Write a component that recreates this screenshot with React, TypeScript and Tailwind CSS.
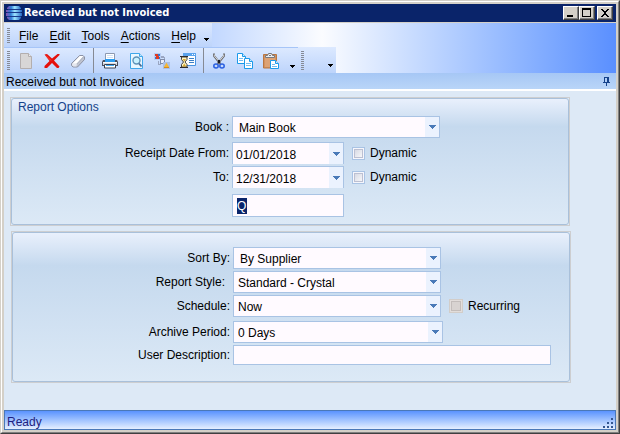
import { useState } from "react";
import type { ReactNode } from "react";
import clsx from "clsx";

function Grip({ dots }: { dots: number }) {
  return (
    <svg width="3" height={dots * 2 - 1} viewBox={`0 0 3 ${dots * 2 - 1}`} shapeRendering="crispEdges" aria-hidden="true">
      {Array.from({ length: dots }, (_, i) => (
        <rect key={i} x="0" y={i * 2} width="3" height="1" fill="#858a96" />
      ))}
    </svg>
  );
}

function DownArrow({ color }: { color: string }) {
  return (
    <svg width="7" height="4" viewBox="0 0 7 4" shapeRendering="crispEdges" aria-hidden="true">
      <path d="M0 0h7v1H0zM1 1h5v1H1zM2 2h3v1H2zM3 3h1v1H3z" fill={color} />
    </svg>
  );
}

function OverflowArrow() {
  return (
    <svg width="5" height="3" viewBox="0 0 5 3" shapeRendering="crispEdges" aria-hidden="true">
      <path d="M0 0h5v1H0zM1 1h3v1H1zM2 2h1v1H2z" fill="#000" />
    </svg>
  );
}

function Logo() {
  return (
    <svg width="16" height="14" viewBox="0 0 16 14" aria-hidden="true">
      <defs>
        <linearGradient id="disc" x1="0" x2="1">
          <stop offset="0" stopColor="#8a4fb0" />
          <stop offset="0.3" stopColor="#2f7fd8" />
          <stop offset="0.55" stopColor="#9fe6ff" />
          <stop offset="1" stopColor="#2467c4" />
        </linearGradient>
      </defs>
      <path d="M3 0h10l2 2v1H1V2z" fill="url(#disc)" />
      <path d="M0 4h16v2H0z" fill="url(#disc)" />
      <path d="M0 7h16v3H0z" fill="url(#disc)" />
      <path d="M1 11h14v1l-2 2H3l-2-2z" fill="url(#disc)" />
      <path d="M2 3h12v1H2zM1 6h14v1H1zM1 10h14v1H1z" fill="#173a8c" />
    </svg>
  );
}

function Icon({ children }: { children: ReactNode }) {
  return (
    <svg width="16" height="16" viewBox="0 0 16 16" aria-hidden="true">
      {children}
    </svg>
  );
}

const newIcon = (
  <Icon>
    <path d="M2.5.5h8l3 3v12h-11z" fill="#d8d6d6" stroke="#b3aeae" />
    <path d="M10.5.5v3h3" fill="#eceaea" stroke="#b3aeae" />
  </Icon>
);
const deleteIcon = (
  <Icon>
    <path d="M.5 1.5 3 1l5 4.500L13.500 1h2v1L10 7.500l5.500 6-1 1.500H13L8 10l-5 5H.5v-2L5.500 8z" fill="#e5100c" />
    <path d="M2 2.500 7 7.500" stroke="#ff4a3a" fill="none" />
  </Icon>
);
const eraserIcon = (
  <Icon>
    <path d="M9.500 2.500H13l1.500 1.500v2.500l-7 7.500H3L1.500 12.500V10.500z" fill="#bfc3cf" stroke="#8d93a6" strokeLinejoin="round" />
    <path d="M9.800 3h3.700L6.800 10.800H2.200z" fill="#fff" />
    <path d="M2 11h4.800L6.500 13.500H3.500L2 12.300z" fill="#e4e7ef" />
    <path d="m6.800 11 7-7.500" stroke="#a3a9ba" strokeWidth=".8" fill="none" />
  </Icon>
);
const printIcon = (
  <Icon>
    <path d="M3.500 8V.5h9V8" fill="#fff" stroke="#8d99b0" />
    <path d="M5 2h6v1H5zM5 4h6v1H5z" fill="#cfe2f8" />
    <path d="M1 7h2v2h10V7h2l1 2v4H0V9z" fill="#4b5160" />
    <path d="M3 6h10v3H3z" fill="#2b9cf0" />
    <path d="M1 9h14v3H1z" fill="#d8dbe3" />
    <path d="M1 9h14v1H1z" fill="#f7f8fb" />
    <path d="M2.500 11.500h11v3.500h-11z" fill="#fff" stroke="#3a4252" />
    <path d="M4 12h8v1H4z" fill="#43a8f2" />
  </Icon>
);
const previewIcon = (
  <Icon>
    <path d="M2.500.5h9l3 3v12h-12z" fill="#e9f6ff" stroke="#3fa6ea" />
    <path d="M11.500.5v3h3" fill="#bfe4fb" stroke="#3fa6ea" />
    <circle cx="8.500" cy="7.500" r="3.500" fill="#c9f1ff" stroke="#5e92b8" strokeWidth="1.400" />
    <path d="m11 10.500 2.500 3" stroke="#4a6c96" strokeWidth="1.800" />
  </Icon>
);
const linkIcon = (
  <Icon>
    <path d="M0 0h7v7H0z" fill="#b7cdf3" />
    <path d="M1 1h3v2H1zM2 3h3v3H2z" fill="#e03a22" />
    <path d="M4 1h2v2H4zM1 4h1v2H1zM5 4h1v2H5z" fill="#3675d4" />
    <path d="M6 6h5v5H6z" fill="#7f8ba8" />
    <path d="M7 7h3v3H7z" fill="#e8eefb" />
    <path d="M7 3h3v1h1v2h-1V5H7zM5 8v3h2v1H4V8z" fill="#9aa6c2" />
    <path d="M9 9h7v7H9z" fill="#a9bfe6" />
    <path d="m12.500 9.500 2.800 5H9.700z" fill="#f7b731" />
    <path d="M10 14h5v1h-5z" fill="#d68b1d" />
  </Icon>
);
const scheduleIcon = (
  <Icon>
    <path d="M3.500.5h12v12h-12z" fill="#fff" stroke="#4b93e0" />
    <path d="M3 0h13v3H3z" fill="#5aa3ee" />
    <path d="M12 1h1v1h-1zM14 1h1v1h-1z" fill="#fff" />
    <path d="M9 5h5v1H9zM9 7h5v1H9zM9 9h5v1H9z" fill="#3b7fc6" />
    <path d="M1.500 4h5.500v2.500L5 9l2 2.500V14H1.500v-2.500l2-2.500-2-2.500z" fill="#fbf3c9" stroke="#4a4538" />
    <path d="M0 3h8v1H0zM0 14h8v1H0z" fill="#2e2c2b" />
    <path d="M2.500 6h3.500L4.300 8.500zM4.200 10.500l2 3H2.500z" fill="#d8a82b" />
  </Icon>
);
const cutIcon = (
  <Icon>
    <path d="M3 .5v2.500L9.500 11M13 .5v2.500L6.500 11" stroke="#6c6c70" strokeWidth="2" fill="none" />
    <path d="M3.300 1.500v1.500L8.500 9M12.700 1.500v1.500L7.500 9" stroke="#eeeeee" strokeWidth=".8" fill="none" />
    <path d="M7 7h2v3H7z" fill="#1c1c22" />
    <ellipse cx="5" cy="13" rx="2.200" ry="2" fill="none" stroke="#2a5fe0" strokeWidth="1.500" />
    <ellipse cx="11" cy="13" rx="2.200" ry="2" fill="none" stroke="#2a5fe0" strokeWidth="1.500" />
  </Icon>
);
const copyIcon = (
  <Icon>
    <path d="M.5.5h5l3 3v7h-8z" fill="#fff" stroke="#1c9aea" />
    <path d="M5.500.5v3h3" fill="#cdeafd" stroke="#1c9aea" />
    <path d="M2 5.500h4M2 7.500h4" stroke="#74bdf0" />
    <path d="M7.500 5.500h5l3 3v7h-8z" fill="#fff" stroke="#1c9aea" />
    <path d="M12.500 5.500v3h3" fill="#cdeafd" stroke="#1c9aea" />
    <path d="M9 10.500h5M9 12.500h5" stroke="#74bdf0" />
  </Icon>
);
const pasteIcon = (
  <Icon>
    <path d="M.5 1.500h13v13.500H.5z" fill="#d4935f" stroke="#b87643" />
    <path d="M2 4h10v10H2z" fill="#dda274" />
    <path d="M2.500 2.500h2l1-2h3l1 2h2v2h-9z" fill="#eceef2" stroke="#77797f" />
    <path d="M6 2h2v1H6z" fill="#77797f" />
    <path d="M7.500 7.500h5l3 3v5h-8z" fill="#fff" stroke="#1c9aea" />
    <path d="M12.500 7.500v3h3" fill="#cdeafd" stroke="#1c9aea" />
    <path d="M9 11.500h3M9 13.500h5" stroke="#74bdf0" />
  </Icon>
);

function Tool({ label, children }: { label: string; children: ReactNode }) {
  return (
    <button type="button" aria-label={label} className="flex h-6 w-[26px] items-center justify-center">
      {children}
    </button>
  );
}

function Separator() {
  return <span className="mx-[2px] h-[25px] w-px bg-[#868a94]" />;
}

function CaptionButton({ label, children }: { label: string; children: ReactNode }) {
  return (
    <button
      type="button"
      aria-label={label}
      className="flex h-[14px] w-4 items-center justify-center border border-t-white border-r-[#404040] border-b-[#404040] border-l-white bg-[#d4d0c8] shadow-[inset_-1px_-1px_0_#808080]"
    >
      <svg width="10" height="10" viewBox="0 0 10 10" shapeRendering="crispEdges" aria-hidden="true">
        {children}
      </svg>
    </button>
  );
}

function Panel({ className, children }: { className?: string; children: ReactNode }) {
  return (
    <section className={clsx("border border-[#cdced0]", className)}>
      <div className="rounded-[3px] border border-[#a9c0da] bg-linear-to-b from-[#e9f0fc] via-[#c5d9ee] via-22% to-[#dce9f6]">
        {children}
      </div>
    </section>
  );
}

function Row({ label, htmlFor, labelClass = "pr-px", children }: { label?: string; htmlFor?: string; labelClass?: string; children: ReactNode }) {
  return (
    <div className="grid grid-cols-[218px_1fr] items-center gap-[2px]">
      {label ? (
        <label htmlFor={htmlFor} className={clsx("text-right leading-5", labelClass)}>
          {label}
        </label>
      ) : (
        <span />
      )}
      <div className="flex items-center">{children}</div>
    </div>
  );
}

function Combo({ id, value, className }: { id: string; value: string; className: string }) {
  return (
    <div className="grid">
      <select
        id={id}
        className={clsx("col-start-1 row-start-1 h-[22px] appearance-none border border-[#a9c3e4] bg-[#fffaff] pt-px outline-none", className)}
      >
        <option>{value}</option>
      </select>
      <span className="pointer-events-none col-start-1 row-start-1 m-px flex w-[14px] items-center justify-center justify-self-end bg-[#ebf2fe]">
        <DownArrow color="#4a7ab8" />
      </span>
    </div>
  );
}

function DateBox({ id, initial }: { id: string; initial: string }) {
  const [value, setValue] = useState(initial);
  return (
    <div className="flex h-[22px] w-28 border border-b-0 border-[#a9c3e4] bg-[#fffaff]">
      <input
        id={id}
        value={value}
        onChange={(e) => setValue(e.target.value)}
        className="min-w-0 flex-1 bg-transparent pt-[2px] pl-[3px] outline-none"
      />
      <button type="button" aria-label="Open calendar" className="flex w-[14px] items-center justify-center bg-[#ebf2fe]">
        <DownArrow color="#4a7ab8" />
      </button>
    </div>
  );
}

function Check({ label, disabled }: { label: string; disabled?: boolean }) {
  return (
    <label className="ml-2 flex items-center gap-[5px] leading-5">
      <input
        type="checkbox"
        disabled={disabled}
        className={clsx(
          "appearance-none border",
          disabled
            ? "size-[14px] border-[#d2cdc9] bg-[#d8d3d1] shadow-[inset_0_0_0_1px_#e2dddb,inset_0_0_0_2px_#c3bdbb]"
            : "size-[13px] border-[#a9c3e4] bg-linear-to-br from-[#cfd2de] to-[#ffffff] shadow-[inset_0_0_0_1px_#f6f6fc,inset_0_0_0_2px_#bcc0d2]",
        )}
      />
      {label}
    </label>
  );
}

const menus = ["File", "Edit", "Tools", "Actions", "Help"];

export default function App() {
  return (
    <div className="flex min-h-screen flex-col border border-t-[#d4d0c8] border-r-[#404040] border-b-[#404040] border-l-[#d4d0c8] bg-[#d4d0c8] font-['Liberation_Sans',Arial,sans-serif] text-[12px] text-black">
      <div className="flex flex-1 flex-col border border-t-white border-r-[#808080] border-b-[#808080] border-l-white p-[2px]">
        <header className="mb-px flex h-[18px] items-center bg-[#0a246a] pr-[3px] pl-[2px]">
          <Logo />
          <h1 className="ml-[2px] flex-1 font-['DejaVu_Sans_Condensed','DejaVu_Sans',sans-serif] text-[11px] font-bold text-white">
            Received but not Invoiced
          </h1>
          <CaptionButton label="Minimize">
            <path d="M1 7h6v2H1z" fill="#000" />
          </CaptionButton>
          <CaptionButton label="Maximize">
            <path d="M0 0h9v9H0zM1 2v6h7V2z" fill="#000" fillRule="evenodd" />
          </CaptionButton>
          <span className="w-[2px]" />
          <CaptionButton label="Close">
            <path d="M1 1h2v1h1v1h2V2h1V1h2v1H8v1H7v1H6v2h1v1h1v1h1v1H7V8H6V7H4v1H3v1H1V8h1V7h1V6h1V4H3V3H2V2H1z" fill="#000" />
          </CaptionButton>
        </header>

        <div className="bg-linear-to-r from-[#5a8fff] via-[#fbfcff] via-52% to-[#5a8fff]">
          <nav className="flex h-6 w-[208px] items-center bg-linear-to-b from-[#dce9ff] to-[#bdd4fb] pl-[3px]">
            <Grip dots={8} />
            <div className="flex flex-1 justify-between pt-px pr-2 pl-[9px]">
              {menus.map((name) => (
                <button type="button" key={name} className="leading-5">
                  <span className="underline underline-offset-2">{name[0]}</span>
                  {name.slice(1)}
                </button>
              ))}
            </div>
            <button type="button" aria-label="More menus" className="flex h-6 w-2 items-end pb-[6px]">
              <OverflowArrow />
            </button>
          </nav>
          <div className="flex h-[26px]">
            <div role="toolbar" aria-label="Standard" className="flex w-[294px] items-center border-t border-[#a6c5f8] bg-linear-to-b from-[#dce9ff] to-[#bdd4fb] pl-[3px]">
              <Grip dots={10} />
              <span className="w-[3px]" />
              <Tool label="New">{newIcon}</Tool>
              <Tool label="Delete">{deleteIcon}</Tool>
              <Tool label="Clear">{eraserIcon}</Tool>
              <Separator />
              <span className="w-px" />
              <Tool label="Print">{printIcon}</Tool>
              <Tool label="Preview">{previewIcon}</Tool>
              <Tool label="Links">{linkIcon}</Tool>
              <Tool label="Schedule">{scheduleIcon}</Tool>
              <Separator />
              <Tool label="Cut">{cutIcon}</Tool>
              <Tool label="Copy">{copyIcon}</Tool>
              <Tool label="Paste">{pasteIcon}</Tool>
              <button type="button" aria-label="Toolbar options" className="ml-auto flex h-6 w-2 items-end pb-[5px]">
                <OverflowArrow />
              </button>
            </div>
            <div role="toolbar" aria-label="Extra" className="flex w-[38px] items-center justify-between bg-linear-to-b from-[#dce9ff] to-[#bdd4fb] pl-[3px]">
              <Grip dots={10} />
              <button type="button" aria-label="Extra toolbar options" className="flex h-6 w-2 items-end pb-[5px]">
                <OverflowArrow />
              </button>
            </div>
          </div>
        </div>

        <div className="flex h-[18px] items-center justify-between border-b-2 border-white bg-linear-to-b from-[#a6c7f5] to-[#b9d5f8] pt-px pr-[6px] pl-[2px]">
          <h2>Received but not Invoiced</h2>
          <button type="button" aria-label="Pin">
            <svg width="7" height="9" viewBox="0 0 7 9" shapeRendering="crispEdges" aria-hidden="true">
              <path d="M1 0h5v5h1v1H4v3H3V6H0V5h1zM2 1v4h2V1z" fill="#15428b" fillRule="evenodd" />
            </svg>
          </button>
        </div>

        <main className="flex flex-1 flex-col gap-[5px] bg-[#dde9f6] pt-[6px] pr-[45px] pl-[6px]">
          <Panel className="mr-px">
            <h3 className="h-[17px] pl-[6px] leading-[17px] text-[#15428b]">Report Options</h3>
            <div className="flex flex-col pb-[7px]">
              <Row label="Book :" htmlFor="book">
                <Combo id="book" value="Main Book" className="w-52 pl-[6px]" />
              </Row>
              <div className="mt-1 mb-[6px] flex flex-col gap-[2px]">
                <Row label="Receipt Date From:" htmlFor="from">
                  <DateBox id="from" initial="01/01/2018" />
                  <Check label="Dynamic" />
                </Row>
                <Row label="To:" htmlFor="to">
                  <DateBox id="to" initial="12/31/2018" />
                  <Check label="Dynamic" />
                </Row>
              </div>
              <Row>
                <div className="flex h-[23px] w-28 items-center border border-[#a9c3e4] bg-[#fffaff] pl-1">
                  <input
                    aria-label="Period"
                    defaultValue="Q"
                    className="h-4 w-[10px] bg-[#0a246a] text-white outline-none"
                  />
                </div>
              </Row>
            </div>
          </Panel>

          <Panel className="ml-px">
            <div className="flex flex-col gap-[2px] pt-[14px] pb-4">
              <Row label="Sort By:" htmlFor="sort">
                <Combo id="sort" value="By Supplier" className="w-52 pl-[6px]" />
              </Row>
              <Row label="Report Style:" htmlFor="style" labelClass="pr-[6px]">
                <Combo id="style" value="Standard - Crystal" className="w-52 pl-1" />
              </Row>
              <Row label="Schedule:" htmlFor="schedule">
                <Combo id="schedule" value="Now" className="w-52 pl-1" />
                <Check label="Recurring" disabled />
              </Row>
              <div className="mt-[2px] flex flex-col gap-[2px]">
                <Row label="Archive Period:" htmlFor="archive">
                  <Combo id="archive" value="0 Days" className="w-[210px] pl-1" />
                </Row>
                <Row label="User Description:" htmlFor="description">
                  <input
                    id="description"
                    className="mr-[18px] h-5 min-w-0 flex-1 border border-[#a9c3e4] bg-[#fffaff] px-1 outline-none"
                  />
                </Row>
              </div>
            </div>
          </Panel>
        </main>

        <footer className="flex h-5 items-center justify-between border border-[#4a78b8] bg-linear-to-b from-[#5a92ff] to-[#e6efff] pl-[2px] text-[#1d1d80]">
          <span className="pt-[3px]">Ready</span>
          <svg width="11" height="11" viewBox="0 0 11 11" shapeRendering="crispEdges" className="mr-px self-end" aria-hidden="true">
            <path d="M8 0h2v2H8zM4 4h2v2H4zM8 4h2v2H8zM0 8h2v2H0zM4 8h2v2H4zM8 8h2v2H8z" fill="#34568f" />
          </svg>
        </footer>
      </div>
    </div>
  );
}
